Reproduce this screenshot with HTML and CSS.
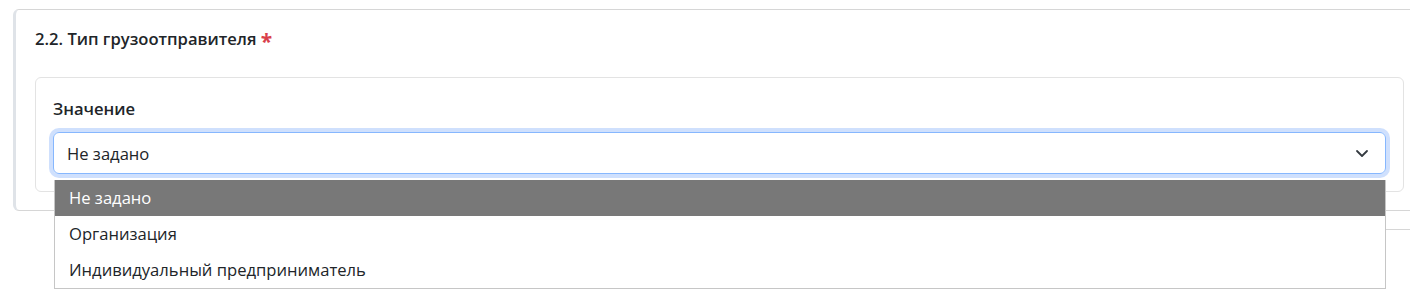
FILE: index.html
```html
<!DOCTYPE html>
<html>
	<head>
		<meta charset="UTF-8">
		<title>Тип грузоотправителя</title>
		<link rel="stylesheet" href="styles.css">
	</head>
	<body>
		<div class="card">
			<div class="cardTitle">2.2. Тип грузоотправителя <span class="req">*</span></div>
			<div class="field">
				<div class="fieldLabel">Значение</div>
				<div class="selectWrap">
					<div class="select">
						<span>Не задано</span>
						<svg class="chevron" width="14" height="10" viewBox="0 0 14 10"><path d="M2 3l5 5 5-5" fill="none" stroke="#343a40" stroke-width="1.8" stroke-linecap="round" stroke-linejoin="round"/></svg>
					</div>
					<div class="options">
						<div class="option active">Не задано</div>
						<div class="option">Организация</div>
						<div class="option">Индивидуальный предприниматель</div>
					</div>
				</div>
			</div>
		</div>
		<div class="nextCard"></div>
	</body>
</html>
```

FILE: styles.css
```css
body{margin:0; padding:9px 0 0 13px; font-family:"Open Sans","Noto Sans","Liberation Sans",sans-serif; color:#212529; background:#fff;}
.card{
	border:1px solid #d6d6d6; border-left:3px solid #dfe3e8; border-right:none;
	border-radius:6px 0 0 6px;
	padding:17px 0 18px 19px;
}
.cardTitle{font-size:16.6px; font-weight:600; line-height:24px;}
.req{color:#d9404b; font-size:21px; font-weight:700; line-height:10px; vertical-align:-4px;}
.field{
	margin-top:26px; width:1333px;
	border:1px solid #e3e3e3; border-radius:6px;
	padding:19px 17px 17px 17px;
}
.fieldLabel{font-size:16.6px; font-weight:600; line-height:24px; margin-bottom:11px;}
.selectWrap{position:relative;}
.select{
	height:42px; box-sizing:border-box;
	border:1px solid #86b7fe; border-radius:6px;
	box-shadow:0 0 0 4px #cfe0fd;
	display:flex; align-items:center; justify-content:space-between;
	padding:0 16px 0 13px; font-size:16.6px;
}
.chevron{display:block;}
.options{
	position:absolute; left:1px; right:0; top:48px;
	background:#fff; border:1px solid #c6c6c6; border-top:none;
	font-size:16.6px; z-index:2;
}
.option{height:36px; line-height:36px; padding:0 14px;}
.option.active{background:#787878; color:#fff;}
.nextCard{margin:18px 0 0 300px; border-top:1px solid #d6d6d6; height:60px;}
```
